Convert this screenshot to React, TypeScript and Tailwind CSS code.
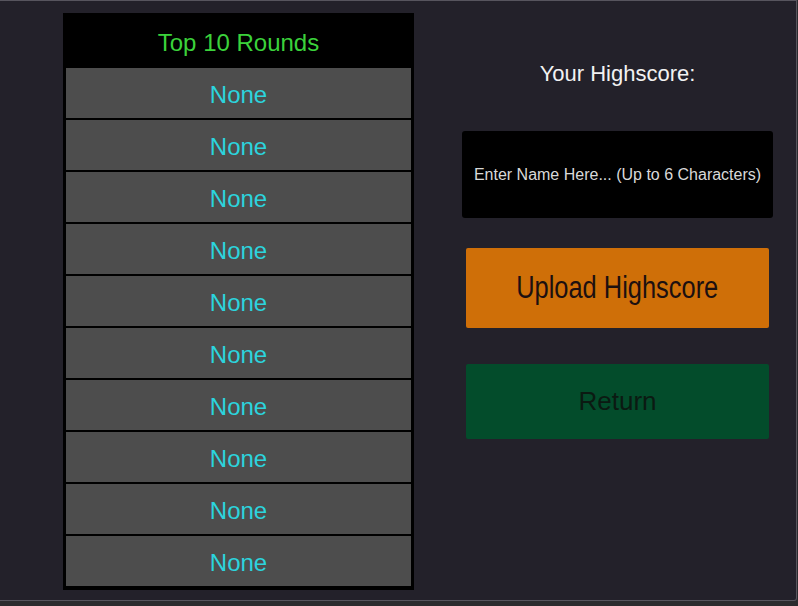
const rows = Array.from({ length: 10 }, (_, i) => i);

export default function App() {
    return (
        <div className="w-[798px] h-[606px] bg-[#2b2b2e] overflow-hidden">
            <div
                className="w-[797px] h-[601px] bg-[#23212a] border-t border-r border-b border-[#57555e] rounded-br-[3px] flex items-start"
                style={{ fontFamily: '"Liberation Sans", Arial, sans-serif' }}
            >
                {/* Leaderboard */}
                <div className="ml-[63px] mt-[12px] w-[351px] h-[577px] bg-black px-[3px] pb-[4px] flex flex-col">
                    <div className="h-[55px] flex items-center justify-center text-[24px] text-[#3bd23b] pt-[4px]">
                        Top 10 Rounds
                    </div>
                    <div className="flex flex-col gap-[2px]">
                        {rows.map((i) => (
                            <div
                                key={i}
                                className="h-[50px] pt-[4px] bg-[#4d4d4d] flex items-center justify-center text-[24px] text-[#2cd4dd]"
                            >
                                None
                            </div>
                        ))}
                    </div>
                </div>

                {/* Submit panel */}
                <div className="ml-[48px] w-[311px] pt-[60px] flex flex-col items-center">
                    <div className="h-[26px] leading-[26px] text-[22px] text-[#f2f2f2]">
                        Your Highscore:
                    </div>
                    <div className="mt-[44px] w-[311px] h-[87px] bg-black rounded-[3px] flex items-center justify-center text-[16px] text-[#d9d9d9]">
                        Enter Name Here... (Up to 6 Characters)
                    </div>
                    <button className="mt-[30px] w-[303px] h-[80px] bg-[#cf6f08] rounded-[2px] flex items-center justify-center text-[31px] text-[#1c1010]">
                        <span className="inline-block scale-x-[0.82] whitespace-nowrap">Upload Highscore</span>
                    </button>
                    <button className="mt-[36px] w-[303px] h-[75px] bg-[#034c2b] rounded-[2px] flex items-center justify-center text-[26px] text-[#0b1a12]">
                        Return
                    </button>
                </div>
            </div>
        </div>
    );
}
